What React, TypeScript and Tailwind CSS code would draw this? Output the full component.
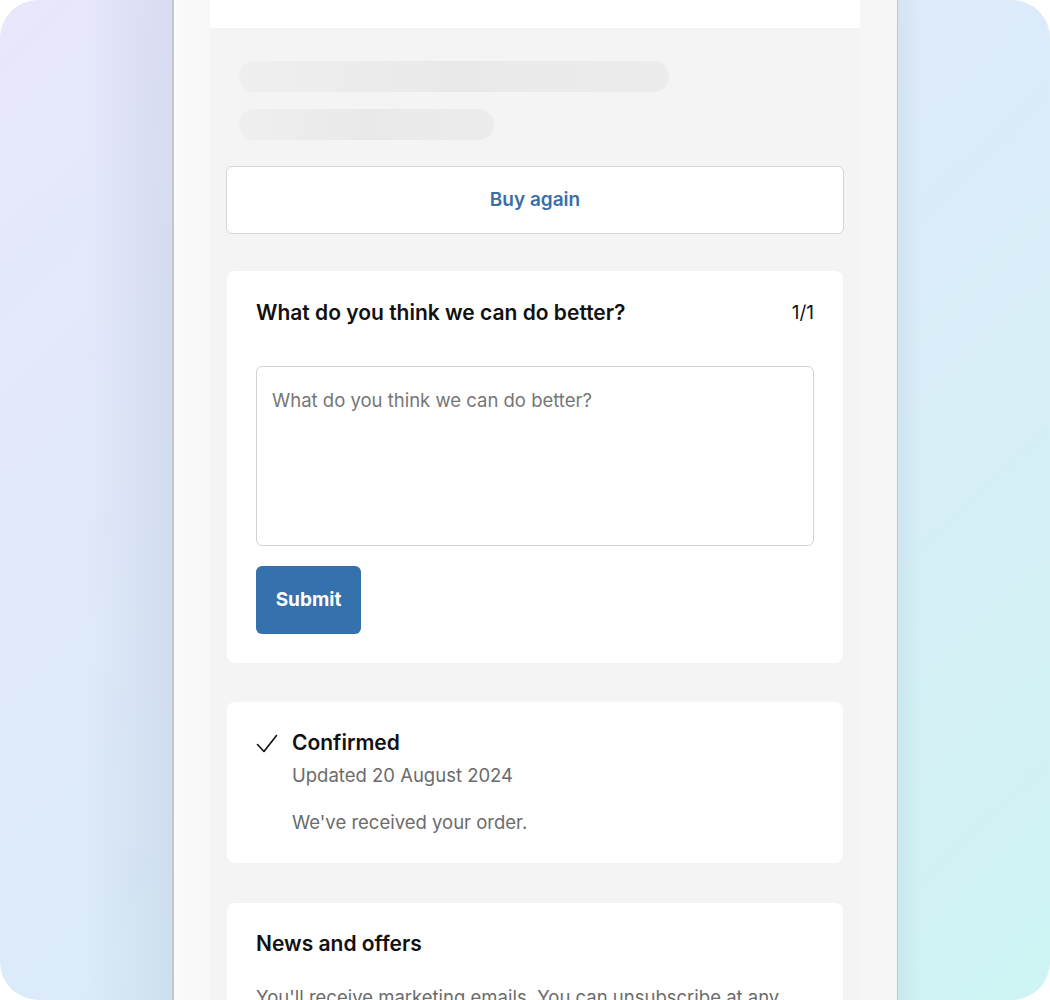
import React from "react";

function CheckIcon() {
    return (
        <svg width="22" height="20" viewBox="0 0 22 20" fill="none" className="shrink-0">
            <path d="M1.5 10.5 L8 17.5 L20.5 1.5" stroke="#111111" strokeWidth="1.6" strokeLinecap="round" strokeLinejoin="round" />
        </svg>
    );
}

function SkeletonBar({ width }: { width: string }) {
    return <div className={`h-[31px] rounded-full bg-linear-to-r from-[#efefef] via-[#e9e9e9] to-[#ececec] ${width}`} />;
}

export default function App() {
    return (
        <div className="w-[1050px] h-[1000px] bg-white font-['Inter',sans-serif]">
            <div className="h-full rounded-[38px] overflow-hidden flex bg-linear-to-br from-[#e8e7fc] via-[#dcebf9] to-[#cdf4f3]">
                <div className="w-[172px] shrink-0 bg-linear-to-r from-transparent via-transparent to-[#1a2a5a]/[0.07]" />

                <div className="w-[726px] shrink-0 flex bg-[#f8f8f8] border-l-2 border-l-[#c3c6cc] border-r border-r-[#b9c6cf]">
                    <div className="w-[36px] shrink-0 bg-linear-to-r from-[#fbfbfb] to-[#f7f7f7]" />

                    <main className="w-[650px] shrink-0 bg-[#f4f4f4]">
                        <div className="h-[28px] bg-white" />

                        <div className="px-[29px] pt-[33px] flex flex-col gap-[17px]">
                            <SkeletonBar width="w-[430px]" />
                            <SkeletonBar width="w-[255px]" />
                        </div>

                        <div className="px-4 pt-[26px]">
                            <button className="block h-[68px] w-full rounded-[6px] border border-[#d6d6d6] bg-white text-[19px] font-semibold text-[#3a6ea8]">
                                Buy again
                            </button>

                            <section className="mx-px mt-[37px] rounded-[8px] bg-white px-[29px] pt-[28px] pb-[29px]">
                                <div className="flex items-center justify-between">
                                    <h2 className="text-[21px] leading-[28px] font-semibold text-[#111111]">
                                        What do you think we can do better?
                                    </h2>
                                    <span className="text-[19px] leading-[28px] text-[#111111]">1/1</span>
                                </div>
                                <textarea
                                    className="mt-[39px] block h-[180px] w-full resize-none rounded-[6px] border border-[#d4d4d4] bg-white px-[15px] pt-[20px] text-[18.5px] leading-[26px] text-[#222222] placeholder:text-[#767676] outline-none"
                                    placeholder="What do you think we can do better?"
                                />
                                <button className="mt-[20px] block h-[68px] w-[105px] rounded-[6px] bg-[#3571ad] text-[19px] font-bold text-white">
                                    Submit
                                </button>
                            </section>

                            <section className="mx-px mt-[39px] rounded-[8px] bg-white px-[29px] pt-[27px] pb-[28px]">
                                <div className="flex gap-[14px]">
                                    <div className="pt-[5px]">
                                        <CheckIcon />
                                    </div>
                                    <div className="flex flex-col">
                                        <h3 className="text-[21px] leading-[28px] font-semibold text-[#111111]">Confirmed</h3>
                                        <p className="mt-[5px] text-[18.5px] leading-[26px] text-[#6b6b6b]">Updated 20 August 2024</p>
                                        <p className="mt-[21px] text-[18.5px] leading-[26px] text-[#6b6b6b]">We've received your order.</p>
                                    </div>
                                </div>
                            </section>

                            <section className="mx-px mt-[40px] rounded-[8px] bg-white px-[29px] pt-[27px] pb-[28px]">
                                <h3 className="text-[21px] leading-[28px] font-semibold text-[#111111]">News and offers</h3>
                                <p className="mt-[26px] text-[18.5px] leading-[26px] text-[#6b6b6b]">
                                    You'll receive marketing emails. You can unsubscribe at any time.
                                </p>
                            </section>
                        </div>
                    </main>

                    <div className="flex-1 bg-[#f6f6f6]" />
                </div>

                <div className="flex-1 bg-linear-to-r from-[#1a3a5a]/[0.05] via-transparent via-[15%] to-transparent" />
            </div>
        </div>
    );
}
